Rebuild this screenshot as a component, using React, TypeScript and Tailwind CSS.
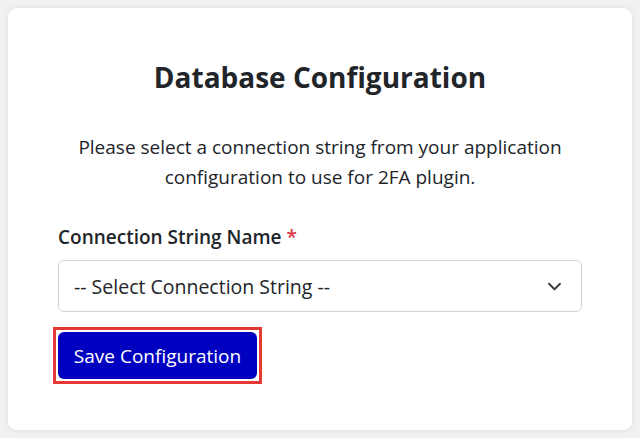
import React from 'react';

const App: React.FC = () => {
  return (
    <div className="min-h-screen w-full bg-[#f1f1f1] p-[8px] font-['Open_Sans',sans-serif] text-[#212529]">
      <div className="rounded-[9px] bg-white px-[50px] pt-[51px] pb-[46px] shadow-[0_0_6px_rgba(0,0,0,0.08)]">
        {/* Header */}
        <h1 className="text-center text-[28px] font-bold leading-[36px]">Database Configuration</h1>
        <p className="mt-[37px] text-center text-[19px] leading-[30px]">
          Please select a connection string from your application
          <br />
          configuration to use for 2FA plugin.
        </p>

        {/* Form */}
        <div className="mt-[30px]">
          <label className="block text-[19px] font-semibold leading-[30px]">
            Connection String Name <span className="text-[#dc3545]">*</span>
          </label>
          <div className="mt-[8px] flex h-[52px] items-center justify-between rounded-[6px] border border-[#ced4da] bg-white pl-[15px] pr-[19px]">
            <span className="pt-[2px] text-[19.5px]">-- Select Connection String --</span>
            <svg width="15" height="11" viewBox="0 0 16 12" fill="none">
              <path d="M2 3l6 6 6-6" stroke="#343a40" strokeWidth="2" strokeLinecap="round" strokeLinejoin="round" />
            </svg>
          </div>
          <div className="mt-[15px] -ml-[5px] inline-block border-[3px] border-[#e53935] p-[2px]">
            <button className="block h-[47px] w-[199px] rounded-[6px] bg-[#0000c0] pt-[2px] text-[19px] text-white">
              Save Configuration
            </button>
          </div>
        </div>
      </div>
    </div>
  );
};

export default App;
